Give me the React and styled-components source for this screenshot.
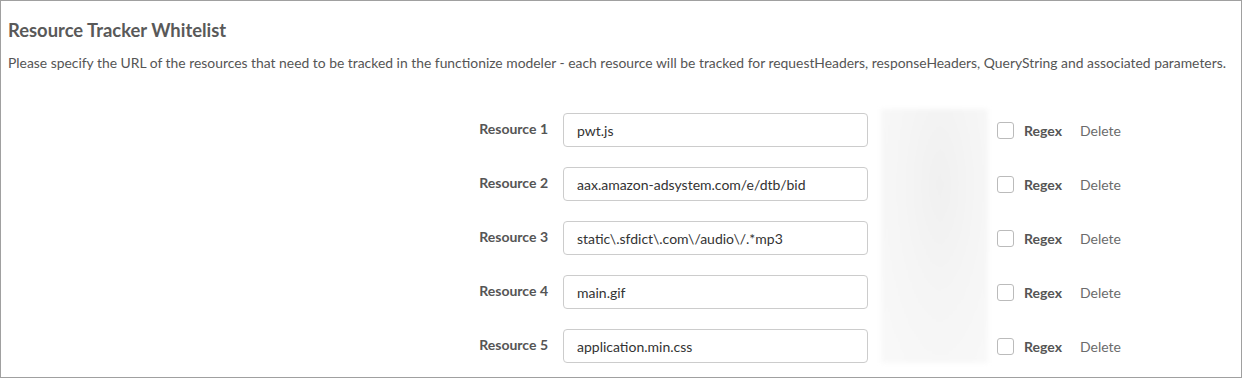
import styled, { createGlobalStyle } from "styled-components";

const GlobalStyle = createGlobalStyle`
  body {
    margin: 0;
    font-family: Lato, "Liberation Sans", sans-serif;
    background: #fff;
  }
`;

const resources = [
  "pwt.js",
  "aax.amazon-adsystem.com/e/dtb/bid",
  "static\\.sfdict\\.com\\/audio\\/.*mp3",
  "main.gif",
  "application.min.css",
];

const App = () => {
  return (
    <>
      <GlobalStyle />
      <Panel>
        <Title>Resource Tracker Whitelist</Title>
        <Description>
          Please specify the URL of the resources that need to be tracked in the
          functionize modeler - each resource will be tracked for requestHeaders,
          responseHeaders, QueryString and associated parameters.
        </Description>
        <Table>
          <Redacted />
          {resources.map((value, i) => (
            <Row key={i}>
              <Label>Resource {i + 1}</Label>
              <InputCell>
                <Input defaultValue={value} />
              </InputCell>
              <Actions>
                <Checkbox type="checkbox" />
                <Regex>Regex</Regex>
                <DeleteLink>Delete</DeleteLink>
              </Actions>
            </Row>
          ))}
        </Table>
      </Panel>
    </>
  );
};

const Panel = styled.section`
  box-sizing: border-box;
  width: 1242px;
  height: 378px;
  border: 1px solid #a0a0a0;
  padding: 0 7px;
  color: #555;
  overflow: hidden;
`;

const Title = styled.h2`
  margin: 0;
  padding-top: 17px;
  font-size: 18.4px;
  font-weight: 700;
  line-height: 24px;
  color: #595959;
`;

const Description = styled.p`
  margin: 12px 0 0;
  font-size: 13.88px;
  line-height: 17px;
  color: #555;
  white-space: nowrap;
`;

const Table = styled.div`
  display: grid;
  grid-template-columns: 540px 320px 120px auto;
  grid-auto-rows: 54px;
  margin-top: 32px;
`;

const Row = styled.div`
  display: contents;
`;

const Label = styled.div`
  grid-column: 1;
  align-self: center;
  text-align: right;
  font-size: 14px;
  font-weight: 700;
  color: #555;
  padding-bottom: 4px;
`;

const InputCell = styled.div`
  grid-column: 2;
  display: flex;
  align-items: center;
  justify-content: flex-end;
`;

const Input = styled.input`
  box-sizing: border-box;
  width: 305px;
  height: 34px;
  border: 1px solid #ccc;
  border-radius: 4px;
  padding: 0 13px;
  font-family: Lato, "Liberation Sans", sans-serif;
  font-size: 14px;
  color: #333;
  outline: none;
`;

const Redacted = styled.div`
  grid-column: 3;
  grid-row: 1 / span 5;
  margin: 6px 0 10px 13px;
  background: radial-gradient(
      ellipse at 55% 30%,
      #f0f0f0 0%,
      #f5f5f5 45%,
      #f9f9f9 100%
    ),
    #f7f7f7;
  filter: blur(2px);
`;

const Actions = styled.div`
  grid-column: 4;
  display: flex;
  align-items: center;
  padding-left: 9px;
  font-size: 14px;
`;

const Checkbox = styled.input`
  appearance: none;
  box-sizing: border-box;
  width: 17px;
  height: 17px;
  margin: 0;
  border: 1px solid #bbb;
  border-radius: 3px;
  background: #fff;
`;

const Regex = styled.span`
  margin-left: 10px;
  font-weight: 700;
  color: #555;
`;

const DeleteLink = styled.span`
  margin-left: 18px;
  color: #6b6b6b;
`;

export default App;
